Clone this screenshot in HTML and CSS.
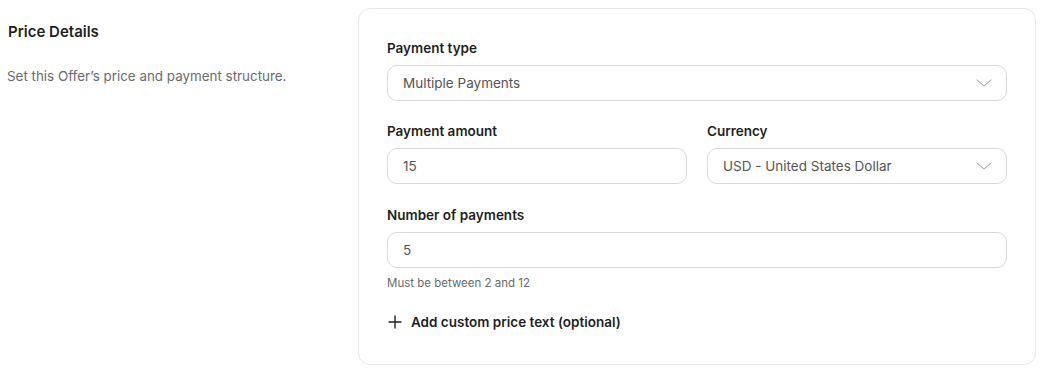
FILE: index.html
```html
<!DOCTYPE html>
<html lang="en">
<head>
<meta charset="utf-8">
<title>Price Details</title>
<link rel="stylesheet" href="styles.css">
</head>
<body>
<div class="page">
  <div class="intro">
    <h2 class="intro-title">Price Details</h2>
    <p class="intro-text">Set this Offer’s price and payment structure.</p>
  </div>
  <div class="card">
    <div class="field">
      <label class="label">Payment type</label>
      <div class="control select">
        <span class="value">Multiple Payments</span>
        <svg class="chev" width="16" height="8" viewBox="0 0 16 8"><path d="M1 1l7 6 7-6" fill="none" stroke="#9a9a9a" stroke-width="1" stroke-linecap="round" stroke-linejoin="round"/></svg>
      </div>
    </div>
    <div class="row">
      <div class="field">
        <label class="label">Payment amount</label>
        <div class="control"><span class="value">15</span></div>
      </div>
      <div class="field">
        <label class="label">Currency</label>
        <div class="control select">
          <span class="value">USD - United States Dollar</span>
          <svg class="chev" width="16" height="8" viewBox="0 0 16 8"><path d="M1 1l7 6 7-6" fill="none" stroke="#9a9a9a" stroke-width="1" stroke-linecap="round" stroke-linejoin="round"/></svg>
        </div>
      </div>
    </div>
    <div class="field">
      <label class="label">Number of payments</label>
      <div class="control"><span class="value">5</span></div>
      <p class="hint">Must be between 2 and 12</p>
    </div>
    <div class="add">
      <svg width="14" height="14" viewBox="0 0 14 14"><path d="M7 0.5v13M0.5 7h13" stroke="#222" stroke-width="1.4"/></svg>
      <span>Add custom price text (optional)</span>
    </div>
  </div>
</div>
</body>
</html>
```

FILE: styles.css
```css
* { box-sizing: border-box; }
html, body { margin: 0; padding: 0; background: #fff; }
body {
  font-family: Inter, "Noto Sans", Arial, sans-serif;
  color: #1f1f1f;
}
.page {
  display: flex;
  padding: 8px 8px 7px 8px;
}
.intro {
  width: 350px;
  flex: none;
  padding-top: 14px;
}
.intro-title {
  margin: 0;
  font-size: 15px;
  font-weight: 600;
  line-height: 20px;
  color: #1f1f1f;
}
.intro-text {
  margin: 25px 0 0 -1px;
  font-size: 13.4px;
  line-height: 18px;
  color: #6b6b6b;
}
.card {
  flex: 1;
  border: 1px solid #e8e8e8;
  border-radius: 12px;
  padding: 29px 28px 31px 28px;
  display: flex;
  flex-direction: column;
  gap: 20px;
}
.row {
  display: flex;
  gap: 20px;
  margin-bottom: 1px;
}
.row .field { flex: 1; }
.field {
  display: flex;
  flex-direction: column;
}
.label {
  font-size: 13.5px;
  font-weight: 600;
  line-height: 20px;
  margin-bottom: 7px;
  color: #1f1f1f;
}
.control {
  height: 36px;
  border: 1px solid #d9d9d9;
  border-radius: 10px;
  display: flex;
  align-items: center;
  padding: 0 14px 0 15px;
}
.value {
  font-size: 13.5px;
  color: #555;
  flex: 1;
}
.chev { flex: none; margin-right: 0; }
.hint {
  margin: 7px 0 0 0;
  font-size: 11.5px;
  line-height: 16px;
  color: #6b6b6b;
}
.add {
  display: flex;
  align-items: center;
  gap: 9px;
  font-size: 13.5px;
  font-weight: 600;
  color: #1f1f1f;
  margin-top: 0;
  padding-left: 1px;
  height: 22px;
}
```
